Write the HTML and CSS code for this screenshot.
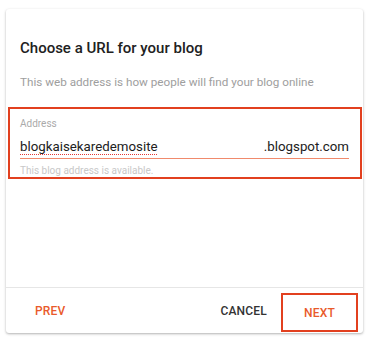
FILE: index.html
```html
<!DOCTYPE html>
<html lang="en">
<head>
<meta charset="utf-8">
<title>Choose a URL for your blog</title>
<link rel="stylesheet" href="styles.css">
</head>
<body>
<div class="card">
  <div class="content">
    <h1 class="title">Choose a URL for your blog</h1>
    <p class="subtitle">This web address is how people will find your blog online</p>
    <div class="highlight">
      <div class="label">Address</div>
      <div class="field">
        <span class="value"><span class="typed">blogkaisekaredemosite</span></span>
        <span class="suffix">.blogspot.com</span>
      </div>
      <div class="helper">This blog address is available.</div>
    </div>
  </div>
  <div class="footer">
    <button class="btn btn-accent btn-prev">PREV</button>
    <span class="spacer"></span>
    <button class="btn btn-cancel">CANCEL</button>
    <button class="btn btn-accent btn-next">NEXT</button>
  </div>
</div>
</body>
</html>
```

FILE: styles.css
```css
html, body {
  margin: 0;
  padding: 0;
  background: #ffffff;
}
body {
  font-family: Roboto, "Liberation Sans", Arial, sans-serif;
  width: 372px;
  height: 344px;
  overflow: hidden;
}
.card {
  margin: 9px 0 0 6px;
  width: 357px;
  height: 324px;
  background: #fff;
  border-radius: 3px;
  box-shadow: 0 1px 3px rgba(0,0,0,0.22), 0 1px 2px rgba(0,0,0,0.10);
  display: flex;
  flex-direction: column;
  box-sizing: border-box;
}
.content {
  flex: 1;
  padding: 29px 0 0 14px;
}
.title {
  margin: 0;
  font-size: 15px;
  line-height: 20px;
  font-weight: 500;
  color: #212121;
}
.subtitle {
  margin: 16px 0 0 0;
  font-size: 11.7px;
  line-height: 16px;
  color: #9e9e9e;
}
.highlight {
  margin: 17px 1px 0 -12px;
  border: 2px solid #e2401f;
  padding: 8px 11px 0 10px;
}
.label {
  font-size: 10px;
  line-height: 14px;
  color: #aaaaaa;
}
.field {
  display: flex;
  align-items: flex-end;
  margin-top: 7px;
  border-bottom: 1px solid #f08a6c;
  padding-bottom: 2px;
}
.value {
  flex: 1;
  font-size: 13.3px;
  line-height: 18px;
  color: #212121;
}
.typed {
  text-decoration: underline dotted #e53935;
  text-decoration-thickness: 1px;
  text-underline-offset: 3px;
}
.suffix {
  font-size: 13.3px;
  line-height: 18px;
  color: #212121;
}
.helper {
  margin-top: 6px;
  font-size: 10px;
  line-height: 12px;
  color: #c8c8c8;
}
.footer {
  height: 46px;
  border-top: 1px solid #e6e6e6;
  display: flex;
  align-items: center;
  padding: 0 5px 0 14px;
  box-sizing: border-box;
}
.btn {
  background: none;
  border: none;
  font-family: Roboto, "Liberation Sans", Arial, sans-serif;
  font-size: 12px;
  font-weight: 500;
  letter-spacing: 0.2px;
  padding: 0;
  cursor: pointer;
}
.btn-accent {
  color: #e95a2b;
}
.btn-prev {
  padding: 0 0 0 15px;
}
.spacer {
  flex: 1;
}
.btn-cancel {
  color: #333333;
  margin-right: 14px;
}
.btn-next {
  width: 77px;
  height: 39px;
  border: 2px solid #e2401f;
  box-sizing: border-box;
  margin-top: 4px;
}
```
